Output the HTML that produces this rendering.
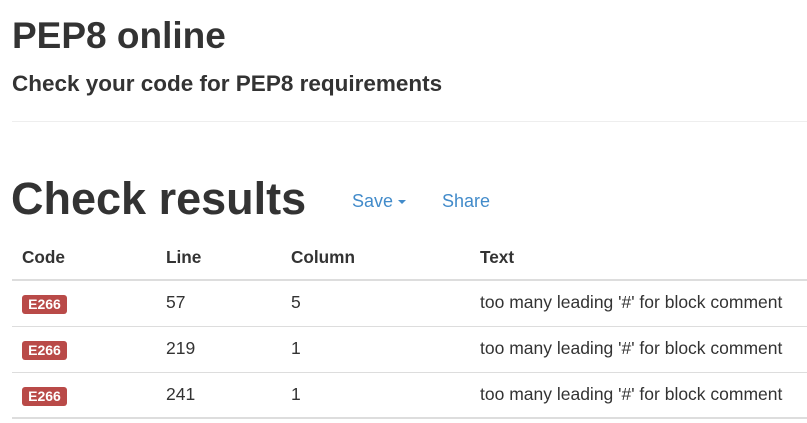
<!DOCTYPE html>
<html><head><style>
body{margin:0;font-family:"Liberation Sans",Arial,sans-serif;color:#333;background:#fff;width:807px;height:423px;overflow:hidden;position:relative}
.a{position:absolute;white-space:nowrap}
h1{margin:0;font-size:37px;font-weight:bold}
.sub{font-size:22.5px;font-weight:bold}
.big{font-size:45px;font-weight:bold}
.lnk{color:#428bca;font-size:18px}
.hr{position:absolute;left:12px;right:0;height:1px;background:#eee;top:121px}
.line{position:absolute;left:12px;width:795px;height:1px;background:#ddd}
.th{font-weight:bold;font-size:17.2px}
.td{font-size:17.5px}
.badge{position:absolute;left:22px;width:45px;height:19px;background:#b94a48;color:#fff;font-weight:bold;font-size:14px;border-radius:3px;text-align:center;line-height:19px}
.caret{display:inline-block;border-left:4px solid transparent;border-right:4px solid transparent;border-top:4px solid #428bca;vertical-align:middle;margin-left:5px}
</style></head><body>
<div class="a" style="left:12px;top:15px"><h1>PEP8 online</h1></div>
<div class="a sub" style="left:12px;top:71px">Check your code for PEP8 requirements</div>
<div class="hr"></div>
<div class="a big" style="left:11px;top:173px">Check results</div>
<div class="a lnk" style="left:352px;top:191px">Save<span class="caret"></span></div>
<div class="a lnk" style="left:442px;top:191px">Share</div>
<div class="a th" style="left:22px;top:247px">Code</div>
<div class="a th" style="left:166px;top:247px">Line</div>
<div class="a th" style="left:291px;top:247px">Column</div>
<div class="a th" style="left:480px;top:247px">Text</div>
<div class="line" style="top:279px;height:2px"></div>
<div class="badge" style="top:295px">E266</div>
<div class="a td" style="left:166px;top:292px">57</div>
<div class="a td" style="left:291px;top:292px">5</div>
<div class="a td" style="left:480px;top:292px">too many leading '#' for block comment</div>
<div class="line" style="top:326px"></div>
<div class="badge" style="top:341px">E266</div>
<div class="a td" style="left:166px;top:338px">219</div>
<div class="a td" style="left:291px;top:338px">1</div>
<div class="a td" style="left:480px;top:338px">too many leading '#' for block comment</div>
<div class="line" style="top:372px"></div>
<div class="badge" style="top:387px">E266</div>
<div class="a td" style="left:166px;top:384px">241</div>
<div class="a td" style="left:291px;top:384px">1</div>
<div class="a td" style="left:480px;top:384px">too many leading '#' for block comment</div>
<div class="line" style="top:417px;height:2px"></div>
</body></html>
